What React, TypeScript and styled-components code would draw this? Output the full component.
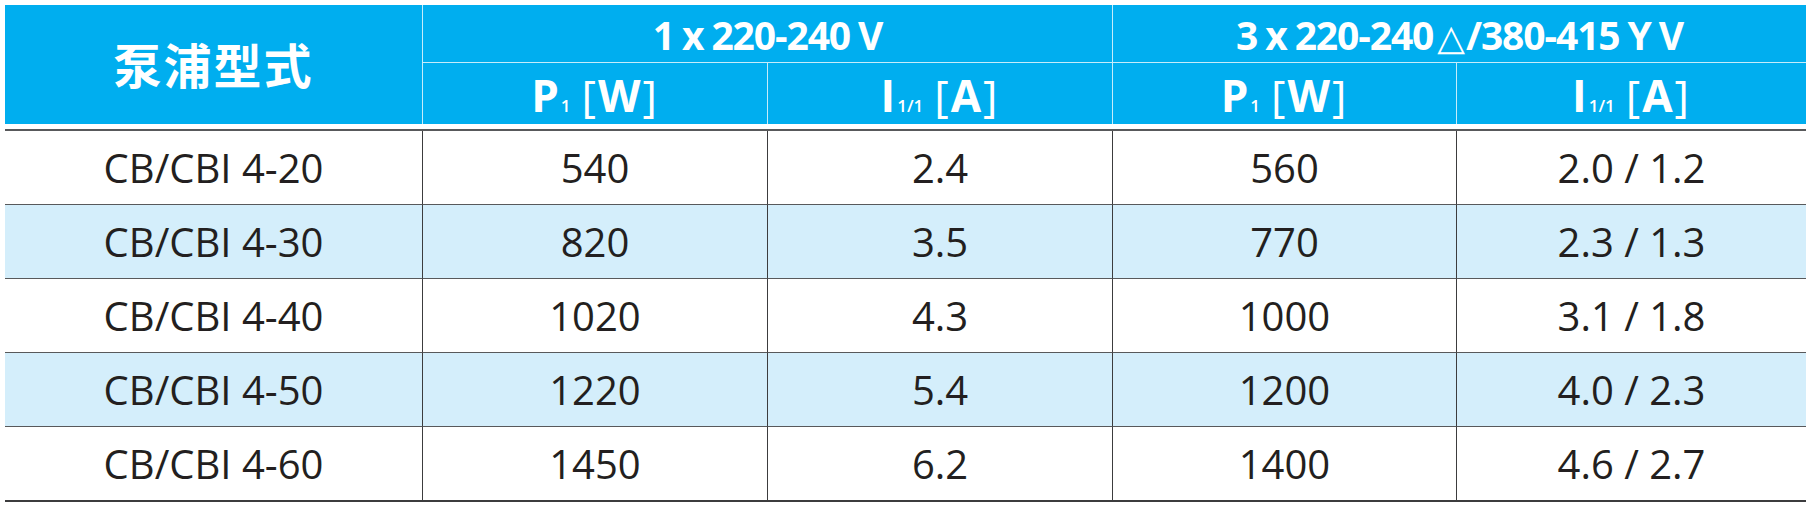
import React from 'react';
import styled, { createGlobalStyle } from 'styled-components';

const GlobalStyle = createGlobalStyle`
  *, *::before, *::after { box-sizing: border-box; }
  body {
    margin: 0;
    background: #ffffff;
    font-family: "Open Sans", "Liberation Sans", sans-serif;
  }
`;

const Page = styled.div`
  padding: 5px 10px 0 5px;
`;

const Table = styled.div`
  display: grid;
  grid-template-columns: 418px 345px 345px 344px 349px;
  width: 1801px;
`;

const HeadCell = styled.div<{ $row: string; $col: string; $divider?: boolean; $under?: boolean }>`
  grid-row: ${p => p.$row};
  grid-column: ${p => p.$col};
  background: #00aeef;
  color: #ffffff;
  display: flex;
  align-items: center;
  justify-content: center;
  font-weight: 700;
  white-space: nowrap;
  border-right: ${p => (p.$divider ? '1px solid #c6ecfb' : 'none')};
  border-bottom: ${p => (p.$under ? '1px solid #c6ecfb' : 'none')};
`;

const TypeTitle = styled(HeadCell)`
  font-family: "Noto Sans CJK TC", "Noto Sans CJK SC", sans-serif;
  font-size: 48px;
  letter-spacing: 2px;
  padding-bottom: 4px;
`;

const GroupTitle = styled(HeadCell)`
  height: 58px;
  font-size: 39px;
  letter-spacing: -1.1px;
  word-spacing: -1px;
  padding-top: 2px;
`;

const UnitTitle = styled(HeadCell)`
  height: 61px;
  font-size: 44px;
  padding-top: 2px;
`;

const Label = styled.span`
  display: inline-block;
`;

const Sub = styled.span`
  font-size: 17px;
  font-weight: 600;
  margin: 0 9px 0 2px;
`;

const Bracket = styled.span`
  font-weight: 400;
  margin: 0 2px;
`;

const Delta = styled.span`
  font-family: "DejaVu Sans", sans-serif;
  font-weight: 400;
  font-size: 36px;
  margin: 0 2px 0 4px;
`;

const Rule = styled.div`
  grid-column: 1 / -1;
  height: 2px;
  margin-top: 5px;
  background: #58595b;
`;

const Cell = styled.div<{ $shade: boolean; $last: boolean; $edge: boolean }>`
  height: ${p => (p.$last ? 75 : 74)}px;
  background: ${p => (p.$shade ? '#d4eefb' : '#ffffff')};
  border-bottom: ${p => (p.$last ? '2px solid #3c3c3e' : '1px solid #58595b')};
  border-right: ${p => (p.$edge ? 'none' : '1px solid #3c3c3e')};
  display: flex;
  align-items: center;
  justify-content: center;
  font-size: 40px;
  color: #231f20;
  padding-bottom: 1px;
`;

const rows = [
  ['CB/CBI 4-20', '540', '2.4', '560', '2.0 / 1.2'],
  ['CB/CBI 4-30', '820', '3.5', '770', '2.3 / 1.3'],
  ['CB/CBI 4-40', '1020', '4.3', '1000', '3.1 / 1.8'],
  ['CB/CBI 4-50', '1220', '5.4', '1200', '4.0 / 2.3'],
  ['CB/CBI 4-60', '1450', '6.2', '1400', '4.6 / 2.7'],
];

const Power = () => (
  <Label>
    P<Sub>1</Sub>
    <Bracket>[</Bracket>W<Bracket>]</Bracket>
  </Label>
);

const Current = () => (
  <Label>
    I<Sub>1/1</Sub>
    <Bracket>[</Bracket>A<Bracket>]</Bracket>
  </Label>
);

function App() {
  return (
    <Page>
      <GlobalStyle />
      <Table>
        <TypeTitle $row="1 / span 2" $col="1" $divider>泵浦型式</TypeTitle>
        <GroupTitle $row="1" $col="2 / span 2" $divider $under>1 x 220-240 V</GroupTitle>
        <GroupTitle $row="1" $col="4 / span 2" $under>
          <Label>
            3 x 220-240<Delta>△</Delta>/380-415 Y V
          </Label>
        </GroupTitle>
        <UnitTitle $row="2" $col="2" $divider><Power /></UnitTitle>
        <UnitTitle $row="2" $col="3" $divider><Current /></UnitTitle>
        <UnitTitle $row="2" $col="4" $divider><Power /></UnitTitle>
        <UnitTitle $row="2" $col="5"><Current /></UnitTitle>
        <Rule />
        {rows.map((row, r) =>
          row.map((value, c) => (
            <Cell
              key={`${r}-${c}`}
              $shade={r % 2 === 1}
              $last={r === rows.length - 1}
              $edge={c === row.length - 1}
            >
              {value}
            </Cell>
          ))
        )}
      </Table>
    </Page>
  );
}

export default App;
